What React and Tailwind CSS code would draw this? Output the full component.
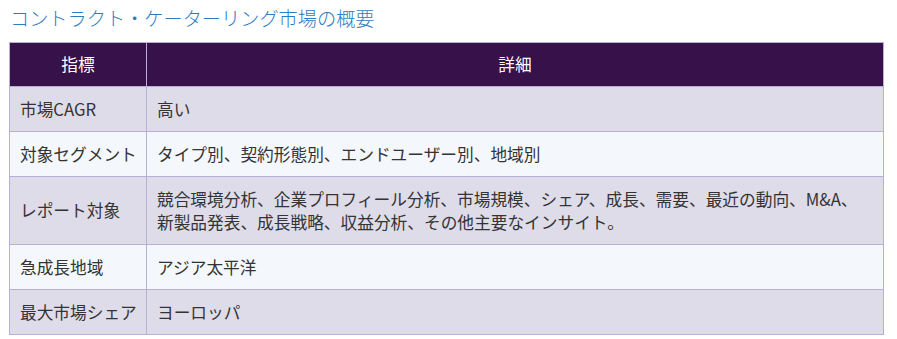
const rows = [
  { label: "市場CAGR", detail: ["高い"] },
  { label: "対象セグメント", detail: ["タイプ別、契約形態別、エンドユーザー別、地域別"] },
  {
    label: "レポート対象",
    detail: [
      "競合環境分析、企業プロフィール分析、市場規模、シェア、成長、需要、最近の動向、M&A、",
      "新製品発表、成長戦略、収益分析、その他主要なインサイト。",
    ],
  },
  { label: "急成長地域", detail: ["アジア太平洋"] },
  { label: "最大市場シェア", detail: ["ヨーロッパ"] },
];

const App = () => {
  return (
    <div
      className="w-[897px] h-[339px] bg-white overflow-hidden pl-[9px] pr-[13px]"
      style={{ fontFamily: '"Noto Sans CJK JP", "Noto Sans", sans-serif' }}
    >
      {/* Title */}
      <h2 className="pt-[4px] pl-[1px] h-[42px] text-[19.2px] leading-[28px] text-[#2f7bbf] font-light">
        コントラクト・ケーターリング市場の概要
      </h2>

      {/* Summary table */}
      <table className="w-[875px] border-collapse text-[16.7px] leading-[23px] text-[#333333]">
        <thead>
          <tr className="bg-[#37114a] text-white">
            <th className="w-[137px] border border-[#b9aed6] py-[10px] font-normal text-center">
              指標
            </th>
            <th className="border border-[#b9aed6] py-[10px] font-normal text-center">
              詳細
            </th>
          </tr>
        </thead>
        <tbody>
          {rows.map((row, i) => (
            <tr
              key={row.label}
              className={i % 2 === 0 ? "bg-[#dfdcea]" : "bg-[#f4f8fc]"}
            >
              <td className="border border-[#b9aed6] py-[10px] pl-[10px] pr-[2px] whitespace-nowrap align-middle">
                {row.label}
              </td>
              <td className="border border-[#b9aed6] py-[10.5px] pl-[10px] pr-[8px] whitespace-nowrap align-middle">
                {row.detail.map((line) => (
                  <div key={line}>{line}</div>
                ))}
              </td>
            </tr>
          ))}
        </tbody>
      </table>
    </div>
  );
};

export default App;
